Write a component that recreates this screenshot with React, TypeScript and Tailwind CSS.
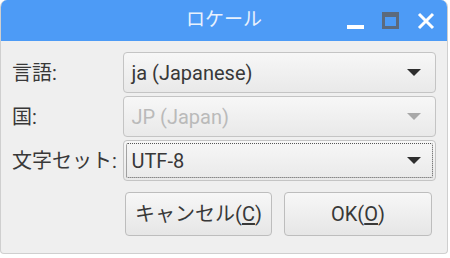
const font = { fontFamily: '"Roboto", "Noto Sans CJK JP", sans-serif' };

type ComboProps = {
    value: string;
    disabled?: boolean;
    focused?: boolean;
};

const Arrow = ({ disabled }: { disabled?: boolean }) => (
    <svg width="14" height="8" viewBox="0 0 14 8" className="shrink-0">
        <polygon points="0,0 14,0 7,7" fill={disabled ? '#a8a8a8' : '#2e2e2e'} />
    </svg>
);

const Combo = ({ value, disabled, focused }: ComboProps) => (
    <div className="h-[41px] w-[314px] rounded-[4px] border border-[#c4c4c4] bg-gradient-to-b from-[#f7f7f7] to-[#e9e9e9] p-[2px]">
        <div
            className={
                focused
                    ? 'flex h-full items-center justify-between rounded-[2px] border border-dotted border-[#555] pl-[4px] pr-[11px]'
                    : 'flex h-full items-center justify-between border border-transparent pl-[4px] pr-[11px]'
            }
        >
            <span className={disabled ? 'text-[20px] leading-none text-[#bababa]' : 'text-[20px] leading-none text-[#383838]'}>
                {value}
            </span>
            <Arrow disabled={disabled} />
        </div>
    </div>
);

const rows = [
    { label: '言語:', value: 'ja (Japanese)' },
    { label: '国:', value: 'JP (Japan)', disabled: true },
    { label: '文字セット:', value: 'UTF-8', focused: true },
];

export default function App() {
    return (
        <div className="h-[258px] w-[450px] bg-white" style={font}>
            <div className="flex h-[254px] w-[448px] flex-col overflow-hidden rounded-t-[7px] rounded-b-[4px] border border-t-0 border-[#cfcfcf] bg-[#efefef]">
                {/* Title bar */}
                <div className="relative flex h-[41px] shrink-0 items-center justify-center bg-[#4d9bf6]">
                    <span className="text-[19px] text-[#e8f1fd]">ロケール</span>
                    <div className="absolute right-[12px] top-0 flex h-full items-center gap-[18px]">
                        <div className="mt-[12px] h-[4px] w-[17px] bg-white" />
                        <div className="h-[17px] w-[17px] border-[3px] border-t-[5px] border-[#5c6a7c]" />
                        <svg width="18" height="18" viewBox="0 0 18 18">
                            <path d="M2 2 L16 16 M16 2 L2 16" stroke="#fff" strokeWidth="3" />
                        </svg>
                    </div>
                </div>

                {/* Body */}
                <div className="flex flex-col px-[11px] pt-[11px]">
                    <div className="flex flex-col gap-[3px]">
                        {rows.map((row) => (
                            <div key={row.label} className="flex items-center">
                                <span className="w-[112px] text-[20px] leading-none text-[#383838]">{row.label}</span>
                                <Combo value={row.value} disabled={row.disabled} focused={row.focused} />
                            </div>
                        ))}
                    </div>
                    <div className="mt-[11px] flex justify-end gap-[12px] pr-[4px]">
                        <button className="h-[44px] w-[147px] rounded-[4px] border border-[#bdbdbd] bg-gradient-to-b from-[#f7f7f7] to-[#e6e6e6] text-[20px] text-[#383838]">
                            キャンセル(<span className="underline underline-offset-2">C</span>)
                        </button>
                        <button className="h-[44px] w-[148px] rounded-[4px] border border-[#bdbdbd] bg-gradient-to-b from-[#f7f7f7] to-[#e6e6e6] text-[20px] text-[#383838]">
                            OK(<span className="underline underline-offset-2">O</span>)
                        </button>
                    </div>
                </div>
            </div>
        </div>
    );
}
